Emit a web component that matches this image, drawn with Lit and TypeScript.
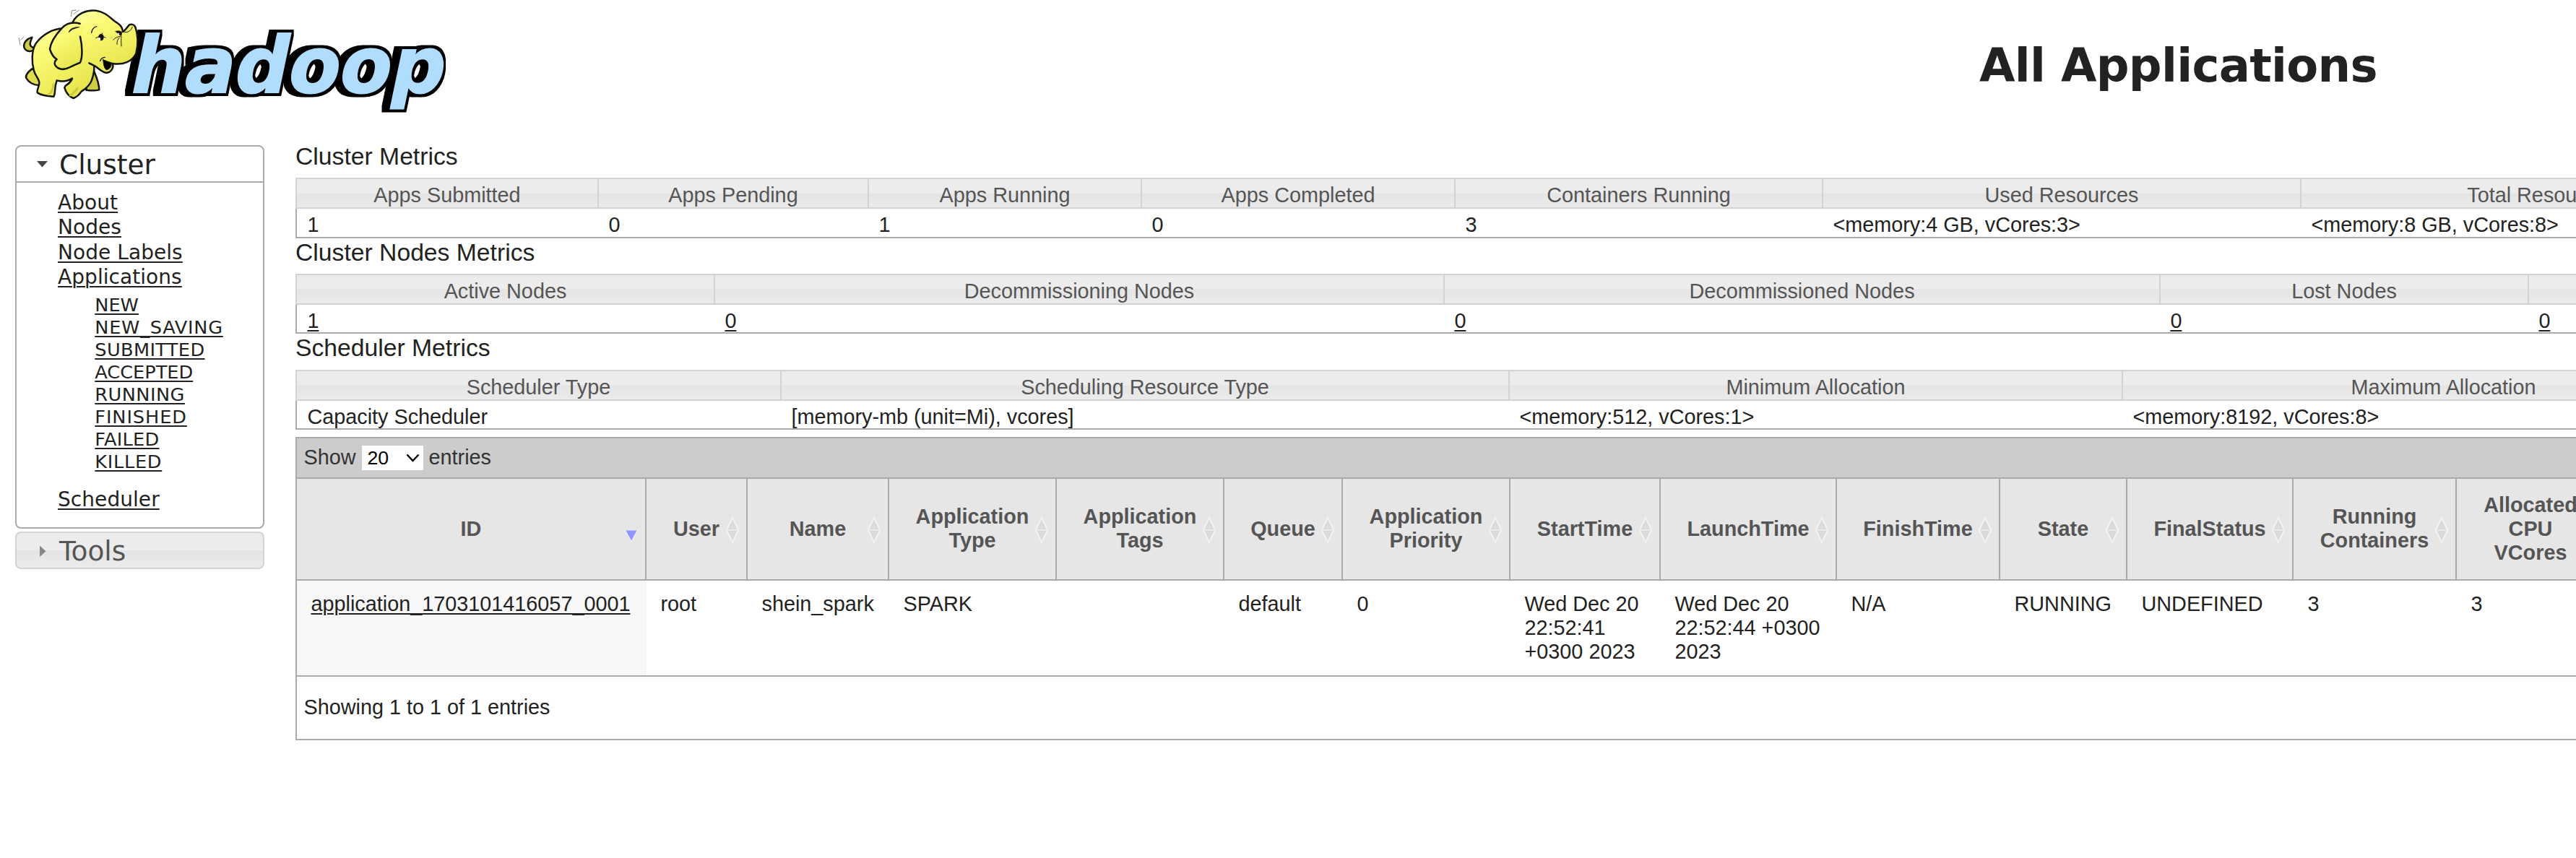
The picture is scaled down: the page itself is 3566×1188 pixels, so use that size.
import { LitElement, html, css, svg, nothing } from "lit";
import { customElement, property } from "lit/decorators.js";

interface Metric {
  label: string;
  value: string;
  width: number;
  link?: boolean;
}

interface Column {
  lines: string[];
  value: string[];
  width: number;
  sorted?: boolean;
}

const CLUSTER: Metric[] = [
  { label: "Apps Submitted", value: "1", width: 418 },
  { label: "Apps Pending", value: "0", width: 374 },
  { label: "Apps Running", value: "1", width: 378 },
  { label: "Apps Completed", value: "0", width: 434 },
  { label: "Containers Running", value: "3", width: 509 },
  { label: "Used Resources", value: "<memory:4 GB, vCores:3>", width: 662 },
  { label: "Total Resources", value: "<memory:8 GB, vCores:8>", width: 667 },
];

const NODES: Metric[] = [
  { label: "Active Nodes", value: "1", width: 579, link: true },
  { label: "Decommissioning Nodes", value: "0", width: 1010, link: true },
  { label: "Decommissioned Nodes", value: "0", width: 991, link: true },
  { label: "Lost Nodes", value: "0", width: 510, link: true },
  { label: "", value: "0", width: 600, link: true },
];

const SCHEDULER: Metric[] = [
  { label: "Scheduler Type", value: "Capacity Scheduler", width: 671 },
  { label: "Scheduling Resource Type", value: "[memory-mb (unit=Mi), vcores]", width: 1008 },
  { label: "Minimum Allocation", value: "<memory:512, vCores:1>", width: 849 },
  { label: "Maximum Allocation", value: "<memory:8192, vCores:8>", width: 889 },
];

const COLUMNS: Column[] = [
  { lines: ["ID"], value: ["application_1703101416057_0001"], width: 484, sorted: true },
  { lines: ["User"], value: ["root"], width: 140 },
  { lines: ["Name"], value: ["shein_spark"], width: 196 },
  { lines: ["Application", "Type"], value: ["SPARK"], width: 232 },
  { lines: ["Application", "Tags"], value: [""], width: 232 },
  { lines: ["Queue"], value: ["default"], width: 164 },
  { lines: ["Application", "Priority"], value: ["0"], width: 232 },
  { lines: ["StartTime"], value: ["Wed Dec 20", "22:52:41", "+0300 2023"], width: 208 },
  { lines: ["LaunchTime"], value: ["Wed Dec 20", "22:52:44 +0300", "2023"], width: 244 },
  { lines: ["FinishTime"], value: ["N/A"], width: 226 },
  { lines: ["State"], value: ["RUNNING"], width: 176 },
  { lines: ["FinalStatus"], value: ["UNDEFINED"], width: 230 },
  { lines: ["Running", "Containers"], value: ["3"], width: 226 },
  { lines: ["Allocated", "CPU", "VCores"], value: ["3"], width: 206 },
];

const STATES: { name: string; tracking: number }[] = [
  { name: "NEW", tracking: 0 },
  { name: "NEW_SAVING", tracking: 0.74 },
  { name: "SUBMITTED", tracking: 0.37 },
  { name: "ACCEPTED", tracking: 0 },
  { name: "RUNNING", tracking: 0.47 },
  { name: "FINISHED", tracking: 0.9 },
  { name: "FAILED", tracking: 0.27 },
  { name: "KILLED", tracking: 0.7 },
];

const template = (items: { width: number }[]) => items.map((i) => `${i.width}px`).join(" ");

@customElement("hadoop-logo")
export class HadoopLogo extends LitElement {
  static styles = css`
    :host {
      display: block;
    }
    svg {
      display: block;
    }
    .word {
      font-family: "DejaVu Sans", Verdana, sans-serif;
      font-weight: 700;
      font-size: 108px;
    }
  `;

  render() {
    return html`
      <svg width="660" height="190" viewBox="0 0 660 190" role="img" aria-label="hadoop">
        <defs>
          <linearGradient id="skin" x1="0" y1="0" x2="0.5" y2="1">
            <stop offset="0" stop-color="#fdfdb0" />
            <stop offset="0.35" stop-color="#fbfb78" />
            <stop offset="1" stop-color="#e8e64e" />
          </linearGradient>
          <filter id="slab" x="-10%" y="-20%" width="120%" height="140%" color-interpolation-filters="sRGB">
            <feMorphology in="SourceAlpha" operator="dilate" radius="7 4" result="grown" />
            <feOffset in="grown" dx="-4" dy="0" result="shifted" />
            <feMerge><feMergeNode in="shifted" /><feMergeNode in="SourceGraphic" /></feMerge>
          </filter>
        </defs>
        <g filter="url(#slab)">
          <text class="word" transform="translate(176.500 127.500) skewX(-11.8)" x="0" y="0" textLength="434"
            lengthAdjust="spacingAndGlyphs" fill="#b0ddfd" stroke="#b0ddfd" stroke-width="2">hadoop</text>
        </g>
        <g transform="translate(10 0) scale(0.33333)" fill="url(#skin)" stroke="#15150f"
          stroke-width="7.500" stroke-linejoin="round" stroke-linecap="round">
          <path d="M112 206C98 218 76 214 70 196C66 176 84 160 103 155C100 168 92 176 96 188C99 198 108 196 112 200Z" fill="#cfcd45" />
          <path d="M103 286C86 300 74 312 79 324C90 345 110 353 134 355L136 300Z" fill="#dfdd4c" />
          <path d="M358 290C370 320 381 340 382 373C364 378 344 376 328 374L330 340Z" fill="#cfcd3f" />
          <path d="M240 119C190 116 142 146 118 182C100 212 102 262 110 290C115 315 130 322 133 342C135 358 120 374 126 386C145 398 170 400 193 401C202 386 194 366 206 334C226 340 250 338 270 326C264 348 240 350 238 364C244 386 260 402 275 408C292 402 300 392 308 380C330 366 346 350 352 330C358 312 362 296 361 276L340 110Z" />
          <path d="M172 392C186 386 190 370 192 350M262 396C276 388 284 376 292 366" fill="none" stroke="#cfcd3f" stroke-width="9" />
          <path d="M262 330C264 342 258 348 250 352" fill="none" stroke-width="5" />
          <path d="M272 92C290 56 330 40 370 44C412 50 436 84 458 96C474 106 479 118 480 132C490 126 500 112 506 104C518 97 528 104 532 112C545 150 543 190 535 222C520 256 480 271 438 264C444 284 428 303 410 302C388 298 376 280 364 274L340 262L296 250L262 110Z" stroke="none" />
          <path d="M272 92C290 56 330 40 370 44C412 50 436 84 458 96C474 106 479 118 480 132C490 126 500 112 506 104C518 97 528 104 532 112C545 150 543 190 535 222C520 256 480 271 438 264C444 284 428 303 410 302C388 298 376 280 364 274L340 262" fill="none" />
          <path d="M398 248L433 264C432 280 424 288 412 290C402 284 400 266 398 248Z" fill="#000" stroke-width="3" />
          <path d="M386 254C388 244 396 239 406 238M400 250L440 264" fill="none" stroke-width="4" />
          <path d="M322 106C280 90 248 94 226 118C200 146 180 178 177 204C184 226 194 240 206 246C194 256 195 268 202 275C212 286 226 290 242 286C262 280 284 266 302 261C314 240 312 190 303 152" stroke="none" />
          <path d="M302 98C270 90 246 96 226 118C200 146 180 178 177 204C184 226 194 240 206 246C194 256 195 268 202 275C212 286 226 290 242 286C262 280 284 266 302 261C314 240 312 190 303 152" fill="none" />
          <path d="M256 134C260 120 270 114 300 112L270 122Z" fill="#15150f" stroke-width="2" />
          <path d="M350 136C352 122 360 113 371 110" fill="none" stroke-width="4" />
          <path d="M368 158C378 154 388 146 396 138M398 152L408 156" fill="none" stroke-width="3" />
          <ellipse cx="390" cy="155" rx="11" ry="14" fill="#111" stroke="none" />
          <ellipse cx="383" cy="162" rx="5" ry="6" fill="#fff" stroke="none" />
          <path d="M450 130C460 126 470 128 476 134L474 148L462 142Z" fill="#111" stroke-width="2" />
          <ellipse cx="461" cy="141" rx="4" ry="4" fill="#fff" stroke="none" />
          <path d="M440 166C448 156 460 152 472 150M456 184C454 172 460 162 466 156M474 192C474 176 472 164 474 152M484 132C500 138 514 128 520 112" fill="none" stroke-width="3" />
          <path d="M266 68L268 44L286 42M276 58L298 42M48 158L54 186M56 166L68 154" fill="none" stroke="#888" stroke-width="3" />
        </g>
      </svg>
    `;
  }
}

@customElement("metric-table")
export class MetricTable extends LitElement {
  @property() heading = "";
  @property({ attribute: false }) items: Metric[] = [];

  static styles = css`
    :host {
      display: block;
      font: 28.8px/39px "Liberation Sans", Arial, Helvetica, sans-serif;
      color: #222;
    }
    .heading {
      margin: 0;
      height: 49.4px;
      font-size: 33.7px;
      line-height: 38px;
      font-weight: 400;
      white-space: nowrap;
    }
    .row {
      display: grid;
    }
    .th,
    .td {
      box-sizing: border-box;
      padding-top: 5px;
      line-height: 34px;
      white-space: nowrap;
    }
    .th {
      height: 43px;
      border: 2px solid #d3d3d3;
      border-right: 0;
      text-align: center;
      color: #555;
      background: linear-gradient(#ebebeb 0%, #ededed 49%, #e4e4e4 51%, #ebebeb 100%);
    }
    .body {
      height: 38.3px;
      border-left: 2px solid #aaa;
      border-bottom: 2px solid #aaa;
    }
    .td {
      padding-left: 15.4px;
    }
    .td:first-child {
      padding-left: 14.4px;
    }
    .body .td:not(:first-child) {
      margin-left: -2px;
    }
    .link {
      text-decoration: underline;
      text-decoration-thickness: 2px;
      text-underline-offset: 3px;
    }
  `;

  render() {
    const cols = `grid-template-columns:${template(this.items)}`;
    return html`
      <h3 class="heading">${this.heading}</h3>
      <div class="row" style=${cols}>
        ${this.items.map((m) => html`<div class="th">${m.label}</div>`)}
      </div>
      <div class="row body" style=${cols}>
        ${this.items.map(
          (m) => html`<div class="td"><span class=${m.link ? "link" : ""}>${m.value}</span></div>`
        )}
      </div>
    `;
  }
}

@customElement("side-nav")
export class SideNav extends LitElement {
  static styles = css`
    :host {
      display: flex;
      flex-direction: column;
      gap: 4px;
      width: 345px;
      font-family: "DejaVu Sans", Verdana, sans-serif;
      color: #222;
    }
    .panel {
      box-sizing: border-box;
      height: 531px;
      border: 2px solid #aaa;
      border-radius: 8px;
    }
    .title {
      box-sizing: border-box;
      display: flex;
      align-items: center;
      height: 50px;
      font-size: 37.44px;
      line-height: 48px;
    }
    .text {
      padding-top: 1px;
    }
    .cluster {
      border-bottom: 2px solid #aaa;
    }
    .tools {
      height: 52px;
      border: 2px solid #d3d3d3;
      border-radius: 8px;
      color: #555;
      background: linear-gradient(#ebebeb 0%, #ededed 49%, #e4e4e4 51%, #ebebeb 100%);
    }
    .arrow {
      width: 58px;
      height: 48px;
      flex: none;
      padding-right: 1px;
    }
    .links,
    .states {
      list-style: none;
      margin: 0;
      padding: 0;
    }
    .links {
      padding: 11px 0 0 57px;
      font-size: 28px;
      line-height: 34.3px;
      letter-spacing: 0.06px;
    }
    .states {
      padding: 6px 0 20px 51.3px;
      font-size: 25.6px;
      line-height: 31px;
    }
    .link {
      display: block;
      width: max-content;
      text-decoration: underline;
      text-decoration-thickness: 2px;
      text-underline-offset: 3px;
      white-space: nowrap;
    }
  `;

  render() {
    return html`
      <section class="panel">
        <div class="title cluster">
          <svg class="arrow" viewBox="0 0 58 48"><path d="M28 20H43L35.5 28.5Z" fill="#454545" /></svg>
          <span class="text">Cluster</span>
        </div>
        <ul class="links">
          ${["About", "Nodes", "Node Labels", "Applications"].map(
            (t) => html`<li><a class="link">${t}</a></li>`
          )}
          <li>
            <ul class="states">
              ${STATES.map(
                (s) => html`<li><a class="link" style="letter-spacing:${s.tracking}px">${s.name}</a></li>`
              )}
            </ul>
          </li>
          <li><a class="link">Scheduler</a></li>
        </ul>
      </section>
      <section class="title tools">
        <svg class="arrow" viewBox="0 0 58 48"><path d="M32 17.500V33L40.500 25.200Z" fill="#888" /></svg>
        <span class="text">Tools</span>
      </section>
    `;
  }
}

@customElement("apps-table")
export class AppsTable extends LitElement {
  static styles = css`
    :host {
      display: block;
      box-sizing: border-box;
      width: 3200px;
      border: 2px solid #aaa;
      font: 28.8px/33px "Liberation Sans", Arial, Helvetica, sans-serif;
      color: #222;
    }
    .toolbar {
      display: flex;
      align-items: center;
      gap: 8px;
      height: 54px;
      padding-left: 9.500px;
      background: #ccc;
      color: #333;
      border-bottom: 2px solid #aaa;
    }
    .text {
      margin-top: -1px;
    }
    .select {
      box-sizing: border-box;
      display: flex;
      align-items: center;
      justify-content: space-between;
      width: 85px;
      height: 34px;
      padding: 0 5px 0 8px;
      background: #fff;
      color: #000;
      font-size: 26.67px;
    }
    .row {
      display: grid;
    }
    .head {
      height: 139px;
      background: #e6e6e6;
      border-bottom: 2px solid #aaa;
    }
    .th {
      display: grid;
      align-items: center;
      border-right: 2px solid #aaa;
      color: #555;
      font-weight: 700;
      text-align: center;
      white-space: nowrap;
    }
    .label,
    .sort {
      grid-area: 1 / 1;
    }
    .label {
      margin-top: -1px;
    }
    .sort {
      justify-self: end;
      margin-right: 9px;
      display: block;
    }
    .cells {
      height: 131px;
      border-bottom: 2px solid #aaa;
    }
    .td {
      padding: 16px 0 0 19.500px;
      white-space: nowrap;
    }
    .sorted {
      background: #f7f7f7;
    }
    .link {
      text-decoration: underline;
      text-decoration-thickness: 2px;
      text-underline-offset: 3px;
    }
    .line {
      display: block;
    }
    .info {
      display: flex;
      align-items: center;
      height: 84px;
      padding: 0 0 2px 9.500px;
      line-height: 33px;
    }
  `;

  render() {
    const cols = `grid-template-columns:${template(COLUMNS)}`;
    return html`
      <div class="toolbar">
        <span class="text">Show</span>
        <span class="select"
          >20<svg width="19" height="12" viewBox="0 0 19 12">
            <path d="M1.500 1.500L9.500 10L17.500 1.500" fill="none" stroke="#000" stroke-width="2.400" /></svg
        ></span>
        <span class="text">entries</span>
      </div>
      <div class="row head" style=${cols}>
        ${COLUMNS.map(
          (c) => html`<div class="th">
            <div class="label">${c.lines.map((l) => html`<span class="line">${l}</span>`)}</div>
            <svg class="sort" width="20" height="38" viewBox="0 0 20 38">
              ${c.sorted
                ? svg`<path d="M2 20.500H18L10 37Z" fill="#f1f1fb" /><path d="M2.500 20.500H17.500L10 34.500Z" fill="#8f94ff" />`
                : svg`<path d="M10 3L18.200 20L10 37L1.800 20Z" fill="#dadada" stroke="#f3f3f3" stroke-width="2" /><path d="M2 20H18" stroke="#e9e9e9" stroke-width="2" />`}
            </svg>
          </div>`
        )}
      </div>
      <div class="row cells" style=${cols}>
        ${COLUMNS.map(
          (c) => html`<div class="td ${c.sorted ? "sorted" : ""}">
            ${c.value[0]
              ? c.value.map((l) => html`<span class="line"><span class=${c.sorted ? "link" : ""}>${l}</span></span>`)
              : nothing}
          </div>`
        )}
      </div>
      <div class="info">Showing 1 to 1 of 1 entries</div>
    `;
  }
}

@customElement("app-root")
export class AppRoot extends LitElement {
  static styles = css`
    :host {
      display: block;
      height: 1188px;
      overflow: hidden;
      background: #fff;
    }
    .header {
      display: grid;
      grid-template-columns: 2740px max-content;
      height: 197px;
    }
    .title {
      margin: 0;
      padding-top: 53px;
      font: 700 64px/76px "DejaVu Sans", Verdana, sans-serif;
      letter-spacing: -0.7px;
      color: #222;
      white-space: nowrap;
    }
    .layout {
      display: grid;
      grid-template-columns: 345px 3157px;
      column-gap: 43px;
      padding-left: 21px;
    }
    .nav {
      margin-top: 4px;
    }
    .main {
      overflow: hidden;
    }
    .apps {
      margin-top: 10px;
    }
  `;

  render() {
    return html`
      <header class="header">
        <hadoop-logo></hadoop-logo>
        <h1 class="title">All Applications</h1>
      </header>
      <div class="layout">
        <side-nav class="nav"></side-nav>
        <main class="main">
          <metric-table heading="Cluster Metrics" .items=${CLUSTER}></metric-table>
          <metric-table heading="Cluster Nodes Metrics" .items=${NODES}></metric-table>
          <metric-table heading="Scheduler Metrics" .items=${SCHEDULER}></metric-table>
          <apps-table class="apps"></apps-table>
        </main>
      </div>
    `;
  }
}
